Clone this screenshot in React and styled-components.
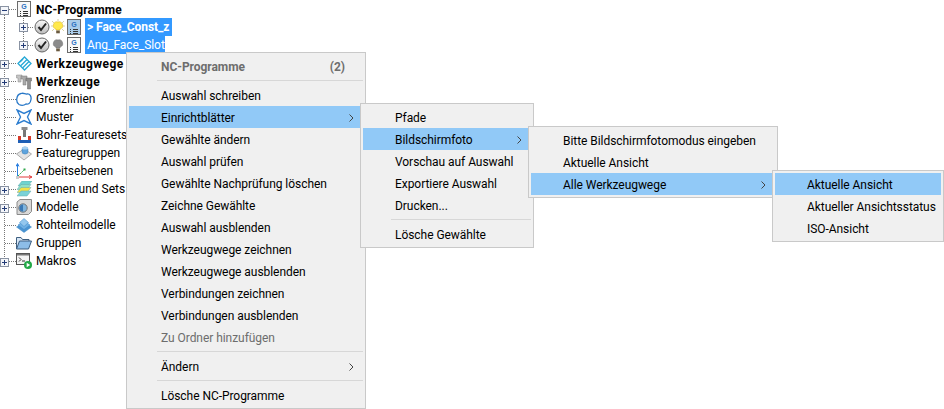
import React from "react";
import styled, { createGlobalStyle } from "styled-components";

const Global = createGlobalStyle`
  html, body { margin: 0; padding: 0; background: #fff; }
  body { width: 944px; height: 409px; overflow: hidden; font-family: Roboto, "Noto Sans", "Liberation Sans", sans-serif; font-size: 12px; color: #000; }
`;

const Page = styled.div`position: relative; width: 944px; height: 409px; overflow: hidden;`;

/* ---------- tree ---------- */
const Tree = styled.div`display: flex; flex-direction: column;`;
const Row = styled.div`
  display: flex; align-items: center; height: 18px; white-space: nowrap;
`;
const Lead = styled.svg`flex: none; display: block;`;
const IconSlot = styled.span`
  flex: none; display: flex; align-items: center; justify-content: center;
  width: ${p => p.$w || 16}px; height: 18px; margin-right: ${p => p.$mr ?? 4}px;
`;
const Label = styled.span`
  font-size: 12px; line-height: 18px; font-weight: ${p => (p.$bold ? 700 : 400)};
  letter-spacing: ${p => (p.$wide ? "0.45px" : p.$bold ? "0.1px" : "0")};
  padding-top: ${p => (p.$bold ? "1px" : "0")};
`;
const Selected = styled.span`
  display: inline-block; height: 18px; line-height: 18px; padding: 0 2px;
  margin-left: 4px; background: #3399ff; color: #fff; font-weight: ${p => (p.$bold ? 700 : 400)};
  width: ${p => p.$w}px; box-sizing: border-box;
  letter-spacing: -0.05px;
`;

const Branch = ({ box, minus, last, first, child, childLast }) => (
  <Lead width={child ? 34 : 16} height="18" viewBox={`0 0 ${child ? 34 : 16} 18`}>
    <path d={`M4.5 ${first ? 9 : 0}V${last ? 9 : 18}`} stroke="#777" strokeDasharray="1 1" fill="none" shapeRendering="crispEdges" />
    {child && <path d={`M23.5 0V${childLast ? 9 : 18}M24 9.5H34`} stroke="#777" strokeDasharray="1 1" fill="none" shapeRendering="crispEdges" />}
    {!child && <path d="M5 9.5H16" stroke="#777" strokeDasharray="1 1" fill="none" shapeRendering="crispEdges" />}
    {box && (
      <g shapeRendering="crispEdges">
        <rect x="0.5" y="6.5" width="8" height="8" fill="#f4f6fa" stroke="#8a93a3" />
        <path d={minus ? "M2 10.5H7" : "M2 10.5H7M4.5 8V13"} stroke="#243c77" />
      </g>
    )}
    {child && (
      <g shapeRendering="crispEdges">
        <rect x="19.5" y="5.5" width="8" height="8" fill="#f4f6fa" stroke="#8a93a3" />
        <path d="M21 9.5H26M23.5 7V12" stroke="#243c77" />
      </g>
    )}
  </Lead>
);

const GDoc = ({ active }) => (
  <svg width="14" height="16" viewBox="0 0 14 16">
    <rect x="0.5" y="0.5" width="13" height="15" fill={active ? "#a9cbe9" : "#f8f8f8"} stroke="#6b6b6b" />
    <text x="7" y="7.5" textAnchor="middle" fontSize="7" fontWeight="700" fontFamily="Liberation Sans" fill="#2b6fc0">G</text>
    <path d="M3 10H4M6 10H11M3 12H4M6 12H11M3 14H4M6 14H11" stroke="#333" shapeRendering="crispEdges" />
  </svg>
);
const Check = () => (
  <svg width="16" height="16" viewBox="0 0 16 16">
    <defs><linearGradient id="cg" x1="0" y1="0" x2="0" y2="1"><stop offset="0" stopColor="#fafafa" /><stop offset="1" stopColor="#bbb" /></linearGradient></defs>
    <circle cx="8" cy="8" r="7" fill="url(#cg)" stroke="#666" />
    <path d="M4.5 8L7 11L12 4.5" fill="none" stroke="#222" strokeWidth="2" />
  </svg>
);
const Bulb = ({ on }) => (
  <svg width="14" height="16" viewBox="0 0 14 16">
    {on && <path d="M7 0V2M1 2L3 4M13 2L11 4M0 7H2M12 7H14M1 12L3 10M13 12L11 10" stroke="#d6d2a8" />}
    <path d="M7 3A3.6 3.6 0 0 0 5 10V11H9V10A3.6 3.6 0 0 0 7 3Z" fill={on ? "#ffe94d" : "#8b8b8b"} stroke={on ? "#e0b820" : "#777"} strokeWidth="0.6" />
    <rect x="5.2" y="11.5" width="3.6" height="2.8" fill="#6a5a40" />
  </svg>
);
const Paths = () => (
  <svg width="15" height="15" viewBox="0 0 15 15" fill="none" stroke="#27a9d6" strokeWidth="1.3">
    <path d="M1 7.5L7.5 1L14 7.5L7.500 14Z" /><path d="M3.500 10L10 3.500M5.500 12L12 5.500M3 6L6 3" />
  </svg>
);
const Tools = () => (
  <svg width="16" height="17" viewBox="0 0 16 17">
    <path d="M0.500 2H6V5H5V9H2V5H0.500Z" fill="#c4c4c4" stroke="#888" strokeWidth=".5" />
    <path d="M5 3H11V6H10V12H7V6H5Z" fill="#aaa" stroke="#777" strokeWidth=".5" />
    <path d="M10 5H15.500V8H14.500V16H11.500V8H10Z" fill="#8e8e8e" stroke="#666" strokeWidth=".5" />
  </svg>
);
const Cloud = () => (
  <svg width="16" height="14" viewBox="0 0 16 14"><path d="M5 1.500C8 0.500 9 2.500 11 2C14 1.500 15.500 4.500 15 7.500C14.500 11.500 12 12.500 10 12C8 13.500 5 13.500 3 12.500C-0.500 10.500 0 2.500 5 1.500Z" fill="#fff" stroke="#2878c8" strokeWidth="1.300" /></svg>
);
const Pattern = () => (
  <svg width="16" height="16" viewBox="0 0 16 16" fill="#fff" stroke="#2f7fd0" strokeWidth="1.4">
    <path d="M1 1L8 4.500L15 1L11.500 8L15 15L8 11.500L1 15L4.500 8Z" />
  </svg>
);
const Drill = () => (
  <svg width="15" height="16" viewBox="0 0 15 16">
    <rect x="4.500" y="0" width="6" height="3" fill="#8c8c8c" /><rect x="6" y="3" width="3" height="7" fill="#777" />
    <path d="M1 9H4V13H11V9H14V16H1Z" fill="#d63a2a" /><rect x="1" y="13" width="13" height="3" fill="#1f5fb5" />
  </svg>
);
const FeatureGroup = () => (
  <svg width="16" height="16" viewBox="0 0 16 16">
    <path d="M0.500 9L8 4L15.500 9L8 15Z" fill="#e4e4e4" stroke="#aaa" />
    <rect x="6" y="2" width="6" height="7" rx="2.500" fill="#5da3dd" stroke="#3b7db5" strokeWidth=".5" />
    <ellipse cx="9" cy="3" rx="3" ry="1.500" fill="#a8d2f2" />
  </svg>
);
const Planes = () => (
  <svg width="16" height="16" viewBox="0 0 16 16" fill="none">
    <path d="M1.500 14V1" stroke="#2a7fe0" /><path d="M0 3.500L1.500 0.500L3 3.500" stroke="#2a7fe0" />
    <path d="M2 14H15.500M13 12.500L16 14L13 15.500" stroke="#e03a3a" />
    <path d="M2 13L8 7" stroke="#2fa84a" strokeDasharray="2 1" />
    <rect x="7.500" y="5.500" width="2" height="2" fill="#2fa84a" />
    <rect x="0" y="13" width="3" height="3" fill="#ccc" />
  </svg>
);
const Layers = () => (
  <svg width="15" height="16" viewBox="0 0 15 16" stroke="#6aa" strokeWidth=".5">
    <path d="M5 0H15L11 5H1Z" fill="#6ed4d0" /><path d="M4 3.500H14L10 8.500H0Z" fill="#8ee0c8" />
    <path d="M4 6.500H14L10 11.500H0Z" fill="#f2e24a" /><path d="M4 10H14L10 15H0Z" fill="#79d2d8" />
  </svg>
);
const Model = () => (
  <svg width="16" height="16" viewBox="0 0 16 16">
    <path d="M1 3L4 0.500H15.500V12.500L12.500 15.500H1Z" fill="#d8d8d8" stroke="#8a8a8a" />
    <circle cx="7" cy="9" r="4.200" fill="#7eb4de" stroke="#777" />
    <path d="M7 9V5.500A3.500 3.500 0 0 0 7 12.500Z" fill="#3a78b5" />
  </svg>
);
const Stock = () => (
  <svg width="16" height="15" viewBox="0 0 16 15" stroke="#3f8ac9" strokeWidth=".5">
    <path d="M8 4L15.500 9L8 14.500L0.500 9Z" fill="#4a94d2" />
    <path d="M8 2.500L14 7L8 11.500L2 7Z" fill="#6fb0e3" />
    <path d="M8 0.500L12.500 4.500L8 8.500L3.500 4.500Z" fill="#93c7ee" />
  </svg>
);
const Folder = () => (
  <svg width="16" height="14" viewBox="0 0 16 14">
    <path d="M0.500 13V1.500H5L6.500 3.500H13V5" fill="#d7e6f5" stroke="#3f5f80" />
    <path d="M0.500 13L3.500 5H15.500L12.500 13Z" fill="#8dbde8" stroke="#3f5f80" />
  </svg>
);
const Macro = () => (
  <svg width="16" height="16" viewBox="0 0 16 16">
    <rect x="0.500" y="0.500" width="13" height="11" fill="#f4f4f4" stroke="#555" />
    <rect x="1" y="1" width="12" height="1.500" fill="#777" />
    <path d="M3 4.500L5 6.500L3 8.500M6 8H9" stroke="#333" fill="none" />
    <circle cx="12" cy="12" r="4" fill="#23a847" />
    <path d="M10.700 9.800L14.200 12L10.700 14.200Z" fill="#fff" />
  </svg>
);

const topRows = [
  { label: "Werkzeugwege", icon: <Paths />, bold: true, wide: true, box: true },
  { label: "Werkzeuge", icon: <Tools />, bold: true, wide: true, box: true },
  { label: "Grenzlinien", icon: <Cloud /> },
  { label: "Muster", icon: <Pattern /> },
  { label: "Bohr-Featuresets", icon: <Drill /> },
  { label: "Featuregruppen", icon: <FeatureGroup /> },
  { label: "Arbeitsebenen", icon: <Planes /> },
  { label: "Ebenen und Sets", icon: <Layers />, box: true },
  { label: "Modelle", icon: <Model />, box: true },
  { label: "Rohteilmodelle", icon: <Stock /> },
  { label: "Gruppen", icon: <Folder /> },
  { label: "Makros", icon: <Macro />, box: true, last: true },
];

/* ---------- menus ---------- */
const Menu = styled.div`
  position: absolute; left: ${p => p.$x}px; top: ${p => p.$y}px; width: ${p => p.$w}px;
  box-sizing: border-box; padding: 2px; background: #f0f0f0; border: 1px solid #c9c9c9;
  z-index: ${p => p.$z};
`;
const Item = styled.div`
  display: flex; align-items: center; justify-content: space-between;
  box-sizing: border-box; height: 22px; padding: 1px 9px 0 32px; font-size: 12px; white-space: nowrap;
  letter-spacing: -0.05px;
  background: ${p => (p.$hot ? "#91c9f7" : "transparent")};
  color: ${p => (p.$off ? "#6d6d6d" : "#000")};
  font-weight: ${p => (p.$title ? 700 : 400)};
`;
const Count = styled.span`margin-right: 9px; color: #6d6d6d; font-weight: 700;`;
const Sep = styled.div`
  height: 1px; margin: 3px 0 3px 28px; background: #d7d7d7;
`;
const Chevron = () => (
  <svg width="5" height="8" viewBox="0 0 5 8" fill="none"><path d="M0.500 0.500L4 4L0.500 7.500" stroke="#444" /></svg>
);

const App = () => (
  <Page>
    <Global />
    <Tree>
      <Row>
        <Branch box minus first />
        <IconSlot><GDoc /></IconSlot>
        <Label $bold>NC-Programme</Label>
      </Row>
      <Row>
        <Branch child />
        <IconSlot $w={16} $mr={1}><Check /></IconSlot>
        <IconSlot $w={14} $mr={2}><Bulb on /></IconSlot>
        <IconSlot $w={14} $mr={0}><GDoc active /></IconSlot>
        <Selected $bold $w={87}>&gt; Face_Const_z</Selected>
      </Row>
      <Row>
        <Branch child childLast />
        <IconSlot $w={16} $mr={1}><Check /></IconSlot>
        <IconSlot $w={14} $mr={2}><Bulb /></IconSlot>
        <IconSlot $w={14} $mr={0}><GDoc /></IconSlot>
        <Selected $w={80}>Ang_Face_Slot</Selected>
      </Row>
      {topRows.map(r => (
        <Row key={r.label}>
          <Branch box={r.box} last={r.last} />
          <IconSlot>{r.icon}</IconSlot>
          <Label $bold={r.bold} $wide={r.wide}>{r.label}</Label>
        </Row>
      ))}
    </Tree>

    <Menu $x={126} $y={52} $w={240} $z={1}>
      <Item $title $off>NC-Programme<Count>(2)</Count></Item>
      <Sep />
      <Item>Auswahl schreiben</Item>
      <Item $hot>Einrichtblätter<Chevron /></Item>
      <Item>Gewählte ändern</Item>
      <Item>Auswahl prüfen</Item>
      <Item>Gewählte Nachprüfung löschen</Item>
      <Item>Zeichne Gewählte</Item>
      <Item>Auswahl ausblenden</Item>
      <Item>Werkzeugwege zeichnen</Item>
      <Item>Werkzeugwege ausblenden</Item>
      <Item>Verbindungen zeichnen</Item>
      <Item>Verbindungen ausblenden</Item>
      <Item $off>Zu Ordner hinzufügen</Item>
      <Sep />
      <Item>Ändern<Chevron /></Item>
      <Sep />
      <Item>Lösche NC-Programme</Item>
    </Menu>

    <Menu $x={360} $y={103} $w={174} $z={2}>
      <Item>Pfade</Item>
      <Item $hot>Bildschirmfoto<Chevron /></Item>
      <Item>Vorschau auf Auswahl</Item>
      <Item>Exportiere Auswahl</Item>
      <Item>Drucken...</Item>
      <Sep />
      <Item>Lösche Gewählte</Item>
    </Menu>

    <Menu $x={528} $y={126} $w={250} $z={3}>
      <Item>Bitte Bildschirmfotomodus eingeben</Item>
      <Item>Aktuelle Ansicht</Item>
      <Item $hot>Alle Werkzeugwege<Chevron /></Item>
    </Menu>

    <Menu $x={772} $y={170} $w={172} $z={4}>
      <Item $hot>Aktuelle Ansicht</Item>
      <Item>Aktueller Ansichtsstatus</Item>
      <Item>ISO-Ansicht</Item>
    </Menu>
  </Page>
);

export default App;
